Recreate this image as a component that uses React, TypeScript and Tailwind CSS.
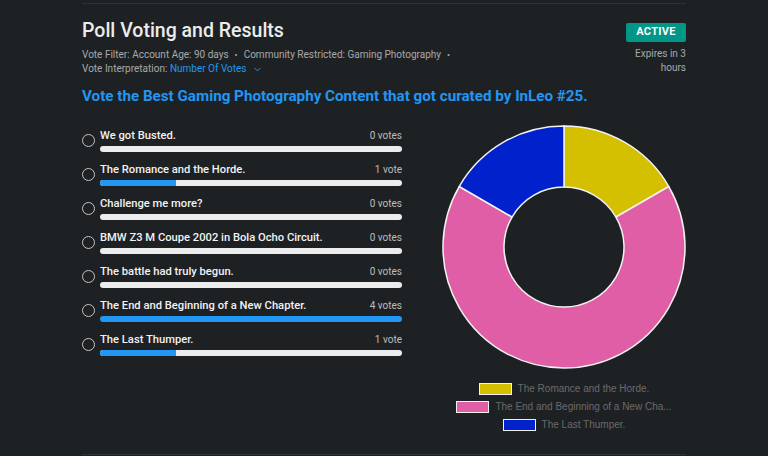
import { ChevronDown } from "lucide-react";

type PollOption = { label: string; votes: number };

const OPTIONS: PollOption[] = [
  { label: "We got Busted.", votes: 0 },
  { label: "The Romance and the Horde.", votes: 1 },
  { label: "Challenge me more?", votes: 0 },
  { label: "BMW Z3 M Coupe 2002 in Bola Ocho Circuit.", votes: 0 },
  { label: "The battle had truly begun.", votes: 0 },
  { label: "The End and Beginning of a New Chapter.", votes: 4 },
  { label: "The Last Thumper.", votes: 1 },
];

const SLICES = [
  { label: "The Romance and the Horde.", legend: "The Romance and the Horde.", votes: 1, color: "#d4bf00" },
  { label: "The End and Beginning of a New Chapter.", legend: "The End and Beginning of a New Cha...", votes: 4, color: "#df5ea6" },
  { label: "The Last Thumper.", legend: "The Last Thumper.", votes: 1, color: "#0021cc" },
];

const ROBOTO = { fontFamily: "Roboto, 'Noto Sans', sans-serif" };

function arcPath(cx: number, cy: number, r: number, ir: number, a0: number, a1: number) {
  // angles in degrees, 0 = top, clockwise
  const pt = (rad: number, a: number) => {
    const t = ((a - 90) * Math.PI) / 180;
    return [cx + rad * Math.cos(t), cy + rad * Math.sin(t)];
  };
  const large = a1 - a0 > 180 ? 1 : 0;
  const [x0, y0] = pt(r, a0);
  const [x1, y1] = pt(r, a1);
  const [x2, y2] = pt(ir, a1);
  const [x3, y3] = pt(ir, a0);
  return `M${x0} ${y0} A${r} ${r} 0 ${large} 1 ${x1} ${y1} L${x2} ${y2} A${ir} ${ir} 0 ${large} 0 ${x3} ${y3} Z`;
}

function Donut() {
  const total = SLICES.reduce((s, x) => s + x.votes, 0);
  let angle = 0;
  return (
    <svg width="244" height="244" viewBox="0 0 244 244" aria-hidden>
      {SLICES.map((s) => {
        const a0 = angle;
        const a1 = angle + (s.votes / total) * 360;
        angle = a1;
        return (
          <path
            key={s.label}
            d={arcPath(122, 122, 121, 60, a0, a1)}
            fill={s.color}
            stroke="#f2f2f2"
            strokeWidth="1.5"
          />
        );
      })}
    </svg>
  );
}

function OptionRow({ option, max }: { option: PollOption; max: number }) {
  const pct = max > 0 ? (option.votes / max) * 100 : 0;
  return (
    <div className="flex items-center gap-[5px]">
      <span className="h-[13px] w-[13px] shrink-0 rounded-full border-[1.5px] border-[#c4c4c4]" />
      <div className="flex min-w-0 flex-1 flex-col">
        <div className="flex h-4 items-center justify-between">
          <span className="text-[11.2px] font-medium leading-4 text-[#f2f2f2]">{option.label}</span>
          <span className="text-[10px] leading-4 text-[#bdbdbd]">
            {option.votes} {option.votes === 1 ? "vote" : "votes"}
          </span>
        </div>
        <div className="mt-[2px] h-[6px] overflow-hidden rounded-full bg-[#ececec]">
          <div className="h-full bg-[#2196f3]" style={{ width: `${pct}%` }} />
        </div>
      </div>
    </div>
  );
}

export default function App() {
  const max = Math.max(...OPTIONS.map((o) => o.votes));
  return (
    <div className="h-[456px] w-full overflow-hidden bg-[#1e2124] pt-[3px]" style={ROBOTO}>
      <section className="mx-auto w-[604px] border-y border-[#2e3135] pb-[20px]">
        <div className="flex items-start justify-between gap-4 pt-[13px]">
          <div className="min-w-0 flex-1">
            <h2 className="text-[19.5px] font-medium leading-7 text-[#ececec]">Poll Voting and Results</h2>
            <div className="mt-[3px] flex max-w-[400px] flex-wrap items-center text-[10px] leading-[14px] text-[#a9a9a9]">
              <span>Vote Filter: Account Age: 90 days</span>
              <span className="mx-[6px] text-[9px]">•</span>
              <span>Community Restricted: Gaming Photography</span>
              <span className="mx-[6px] text-[9px]">•</span>
              <span>
                Vote Interpretation:{" "}
                <span className="inline-flex items-center gap-[5px] text-[#2196f3]">
                  Number Of Votes
                  <ChevronDown size={11} strokeWidth={2} />
                </span>
              </span>
            </div>
          </div>
          <div className="flex w-[60px] shrink-0 flex-col items-end pt-[6px]">
            <span className="flex h-[19px] w-[60px] items-center justify-center rounded-[2px] bg-[#009688] text-[11px] font-bold tracking-wide text-white">
              ACTIVE
            </span>
            <p className="mt-[5px] text-right text-[10px] leading-[14px] text-[#a9a9a9]">Expires in 3 hours</p>
          </div>
        </div>

        <h3 className="mt-[9px] text-[15.2px] font-bold leading-[22px] text-[#2196f3]">
          Vote the Best Gaming Photography Content that got curated by InLeo #25.
        </h3>

        <div className="mt-[18px] flex items-start gap-[40px]">
          <div className="flex w-[321px] flex-col gap-[10px] pt-[3px]">
            {OPTIONS.map((o) => (
              <OptionRow key={o.label} option={o} max={max} />
            ))}
          </div>
          <div className="flex flex-1 flex-col items-center">
            <Donut />
            <div
              className="mt-[11px] flex flex-col items-center text-[10px] leading-[18px] text-[#6a6a6a]"
              style={{ fontFamily: "'Liberation Sans', Arial, sans-serif" }}
            >
              {SLICES.map((s) => (
                <div key={s.label} className="flex items-center gap-[6px]">
                  <span className="h-[12px] w-[33px] border-[1.5px] border-[#f2f2f2]" style={{ backgroundColor: s.color }} />
                  <span>{s.legend}</span>
                </div>
              ))}
            </div>
          </div>
        </div>
      </section>
    </div>
  );
}
